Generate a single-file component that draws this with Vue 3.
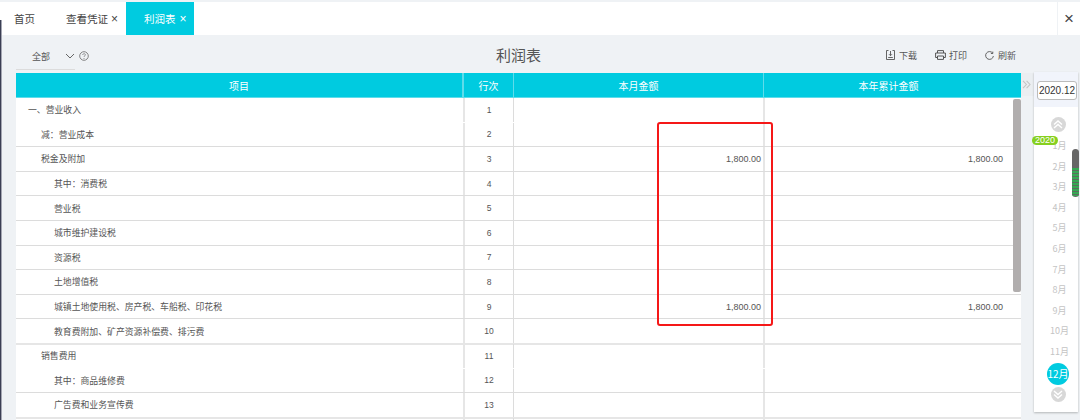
<script setup>
const rows = [
  { name: '一、营业收入', indent: 'i0', no: 1, flat: true },
  { name: '减：营业成本', indent: 'i1', no: 2 },
  { name: '税金及附加', indent: 'i1', no: 3, month: '1,800.00', year: '1,800.00' },
  { name: '其中：消费税', indent: 'i2', no: 4 },
  { name: '营业税', indent: 'i2', no: 5 },
  { name: '城市维护建设税', indent: 'i2', no: 6 },
  { name: '资源税', indent: 'i2', no: 7 },
  { name: '土地增值税', indent: 'i2', no: 8 },
  { name: '城镇土地使用税、房产税、车船税、印花税', indent: 'i2', no: 9, month: '1,800.00', year: '1,800.00' },
  { name: '教育费附加、矿产资源补偿费、排污费', indent: 'i2', no: 10, thick: true },
  { name: '销售费用', indent: 'i1', no: 11, flat: true },
  { name: '其中：商品维修费', indent: 'i2', no: 12 },
  { name: '广告费和业务宣传费', indent: 'i2', no: 13, thick: true },
  { name: '', indent: 'i2', no: '' }
]
const months = ['1月', '2月', '3月', '4月', '5月', '6月', '7月', '8月', '9月', '10月', '11月']
</script>

<template>
  <div class="page">
    <header class="tabs">
      <div class="tab home">首页</div>
      <div class="tab voucher">查看凭证<span class="x">×</span></div>
      <div class="tab active">利润表<span class="x">×</span></div>
      <div class="close">×</div>
    </header>

    <div class="body">
      <main class="report">
        <div class="toolbar">
          <div class="filter">
            <div class="select">
              <span>全部</span>
              <svg width="10" height="6" viewBox="0 0 10 6"><path d="M1 1l4 4 4-4" fill="none" stroke="#666" stroke-width="1" /></svg>
            </div>
            <svg class="help" width="10" height="10" viewBox="0 0 10 10">
              <circle cx="5" cy="5" r="4.3" fill="none" stroke="#777" stroke-width="0.9" />
              <path d="M3.7 4c0-1.7 2.7-1.7 2.7-.2 0 1-1.4 1-1.4 2.1" fill="none" stroke="#777" stroke-width="0.8" />
              <circle cx="5" cy="7.4" r="0.5" fill="#777" />
            </svg>
          </div>
          <h1>利润表</h1>
          <div class="actions">
            <span class="action a1">
              <svg width="9" height="10" viewBox="0 0 9 10"><path d="M2.5.5H.5v9h8v-9h-2M4.5 1v4.5M3 4.2l1.5 1.5L6 4.2M2.2 7.5h4.6" fill="none" stroke="#555" stroke-width="0.9" /></svg>下载
            </span>
            <span class="action a2">
              <svg width="11" height="10" viewBox="0 0 11 10"><path d="M2.5 3V.6h6V3M2.5 7.5H.6V3h9.8v4.5H8.5M2.5 6h6v3.4h-6z" fill="none" stroke="#555" stroke-width="1" /></svg>打印
            </span>
            <span class="action a3">
              <svg width="9" height="9" viewBox="0 0 9 9"><path d="M7.7 2.2A3.9 3.9 0 1 0 8.4 5M7.8.6v1.9H5.9" fill="none" stroke="#555" stroke-width="0.9" /></svg>刷新
            </span>
          </div>
        </div>

        <div class="sheet">
          <div class="table">
            <div class="thead">
              <div>项目</div>
              <div class="wide-line">行次</div>
              <div>本月金额</div>
              <div class="gutter">本年累计金额</div>
            </div>
            <div class="tbody">
              <div v-for="(r, i) in rows" :key="i" class="tr" :class="{ flat: r.flat, thick: r.thick }">
                <div class="td name" :class="r.indent">{{ r.name }}</div>
                <div class="td no">{{ r.no }}</div>
                <div class="td money">{{ r.month }}</div>
                <div class="td money">{{ r.year }}</div>
              </div>
            </div>
            <div class="scrollbar"></div>
          </div>
          <div class="collapse">
            <svg width="9" height="9" viewBox="0 0 9 9"><path d="M1 .8l3.4 3.7L1 8.2M4.6.8L8 4.5 4.6 8.2" fill="none" stroke="#c4c4c4" stroke-width="1.1" /></svg>
          </div>
        </div>
      </main>

      <aside class="side">
        <div class="period"><div class="period-box">2020.12</div></div>
        <div class="cal">
          <div class="arrow up">
            <svg width="10" height="9" viewBox="0 0 10 9"><path d="M1 4.5l4-3.5 4 3.5M1 8l4-3.5L9 8" fill="none" stroke="#fff" stroke-width="1.4" /></svg>
          </div>
          <span class="year">2020</span>
          <div class="month" v-for="m in months" :key="m">{{ m }}</div>
          <div class="month current">12月</div>
          <div class="arrow down">
            <svg width="10" height="9" viewBox="0 0 10 9"><path d="M1 1l4 3.5L9 1M1 4.5L5 8l4-3.5" fill="none" stroke="#fff" stroke-width="1.4" /></svg>
          </div>
          <div class="thumb"><div class="thumb-fill"></div></div>
        </div>
      </aside>
    </div>

    <div class="edge"></div>
    <div class="mark"></div>
  </div>
</template>

<style>
html, body { margin: 0; padding: 0; background: #eff2f5; overflow: hidden; }
</style>

<style scoped>
.page {
  position: relative;
  width: 1080px;
  height: 420px;
  overflow: hidden;
  background: #eff2f5;
  font-family: "Noto Sans CJK SC", "Liberation Sans", sans-serif;
  color: #555;
  display: flex;
  flex-direction: column;
}
.tabs {
  height: 33px;
  margin-top: 2px;
  flex: none;
  background: #fff;
  display: flex;
  align-items: stretch;
  font-size: 10.5px;
}
.tab { display: flex; align-items: center; color: #444; }
.home { width: 66px; padding-left: 14px; box-sizing: border-box; }
.voucher { width: 60px; }
.active { width: 68px; padding-left: 18px; box-sizing: border-box; background: #00cbe0; color: #fff; }
.x { margin-left: 3px; font-size: 12px; font-family: "Liberation Sans", sans-serif; }
.active .x { margin-left: 4px; }
.close {
  margin-left: auto;
  width: 22px;
  border-left: 1px solid #eff2f5;
  display: flex;
  align-items: center;
  justify-content: center;
  font: 17px/1 "Liberation Sans", sans-serif;
  color: #444;
}
.body { flex: 1; display: flex; min-height: 0; }
.report { width: 1018px; margin-left: 16px; flex: none; display: flex; flex-direction: column; min-height: 0; }
.toolbar { height: 38px; flex: none; position: relative; display: flex; align-items: center; justify-content: space-between; }
.filter { display: flex; align-items: center; height: 31px; }
.select {
  width: 59px;
  height: 31px;
  box-sizing: border-box;
  padding: 5px 0 0 16px;
  border-bottom: 1px solid #dcdcdc;
  display: flex;
  align-items: center;
  justify-content: space-between;
  font-size: 9px;
  color: #555;
}
.help { margin-left: 4px; margin-top: 4px; }
h1 {
  position: absolute;
  left: 480px;
  top: 9px;
  margin: 0;
  font-size: 15px;
  line-height: 22px;
  font-weight: 400;
  color: #555;
}
.actions { display: flex; align-items: center; margin-right: 18px; font-size: 9px; color: #555; padding-top: 2px; }
.action { display: flex; align-items: center; gap: 4px; }
.a2 { margin-left: 18px; gap: 3px; }
.a3 { margin-left: 18px; gap: 4px; }
.sheet { flex: 1; display: flex; min-height: 0; }
.table { width: 1005px; flex: none; position: relative; background: #fff; display: flex; flex-direction: column; overflow: hidden; }
.thead {
  height: 25px;
  flex: none;
  box-sizing: border-box;
  border-bottom: 1px solid #5fdcea;
  display: grid;
  grid-template-columns: 447px 51px 250px 1fr;
  background: #00cbe0;
  color: #fff;
  font-size: 10px;
}
.thead > div { display: flex; align-items: center; justify-content: center; border-right: 1px solid #5fdcea; }
.thead > div:last-child { border-right: 0; }
.thead > .wide-line { border-left: 1px solid #5fdcea; }
.thead > .gutter { padding-right: 8px; }
.tr {
  display: grid;
  grid-template-columns: 447px 51px 251px 1fr;
  height: 24.6px;
  box-sizing: border-box;
  border-bottom: 1px solid #dcdcdc;
  font-size: 8.85px;
  color: #555;
}
.tr.flat { border-bottom-color: transparent; }
.tr.thick { height: 25.6px; margin-bottom: -1px; border-bottom: 2px solid #e6e6e6; }
.td { display: flex; align-items: center; min-width: 0; box-sizing: border-box; }
.i0 { padding-left: 12px; }
.i1 { padding-left: 25px; }
.i2 { padding-left: 38px; }
.no { justify-content: center; border-left: 2px solid #e6e6e6; border-right: 1px solid #dcdcdc; font-family: "Liberation Sans", sans-serif; font-size: 8.5px; }
.money { justify-content: flex-end; padding-right: 2px; border-right: 2px solid #e6e6e6; font-family: "Liberation Sans", sans-serif; font-size: 9px; }
.money:last-child { border-right: 0; padding-right: 18px; }
.scrollbar { position: absolute; right: 0; top: 26px; width: 8px; height: 193px; border-radius: 2px; background: #b1aeae; }
.collapse {
  width: 13px;
  height: 23px;
  background: #ebeef1;
  box-sizing: border-box;
  padding-left: 1px;
  display: flex;
  align-items: center;
}
.side { flex: none; width: 44px; height: 340px; display: flex; flex-direction: column; background: #fff; box-shadow: 0 1px 2px rgba(0,0,0,.25); margin-top: 37px; }
.period { height: 35px; flex: none; background: #f1f4fb; padding: 9px 0 0 3px; box-sizing: border-box; }
.period-box {
  width: 40px;
  height: 19px;
  box-sizing: border-box;
  border: 1px solid #bbb;
  border-radius: 3px;
  background: #fff;
  color: #333;
  font: 10px/17px "Liberation Sans", sans-serif;
  text-align: center;
}
.cal { position: relative; flex: 1; display: flex; flex-direction: column; align-items: center; padding-left: 4px; box-sizing: border-box; }
.arrow { width: 15px; height: 15px; border-radius: 50%; background: #d8d8d8; display: flex; align-items: center; justify-content: center; flex: none; }
.up { margin: 10px 0 3px; }
.down { margin-top: 2px; }
.month { height: 20.6px; flex: none; width: 100%; font: 9px/21px "Noto Sans CJK SC", sans-serif; color: #c4c4c4; text-align: center; padding-left: 3px; box-sizing: border-box; }
.month.current {
  width: 22px;
  height: 22px;
  margin-top: 1px;
  padding: 0;
  border-radius: 50%;
  background: #00cbe0;
  color: #fff;
  font-size: 10px;
  line-height: 22px;
}
.year {
  position: absolute;
  left: -2px;
  top: 29px;
  width: 26px;
  height: 9px;
  border-radius: 5px;
  background: #86d01f;
  color: #fff;
  font: 9px/9px "Liberation Sans", sans-serif;
  text-align: center;
}
.thumb { position: absolute; left: 38px; top: 42px; width: 7px; height: 48px; border-radius: 3.5px; background: #666; overflow: hidden; }
.thumb-fill {
  margin-top: 19px;
  height: 28px;
  background: repeating-linear-gradient(#35a853 0 2px, #5c6b5e 2px 3px);
}
.edge { position: absolute; left: 0; top: 20px; bottom: 0; width: 1px; background: #3b3f54; box-shadow: 1px 0 0 #a4a6b2; }
.mark {
  position: absolute;
  left: 657px;
  top: 122px;
  width: 116px;
  height: 204px;
  box-sizing: border-box;
  border: 2px solid #f51818;
  border-radius: 3px;
}
</style>
